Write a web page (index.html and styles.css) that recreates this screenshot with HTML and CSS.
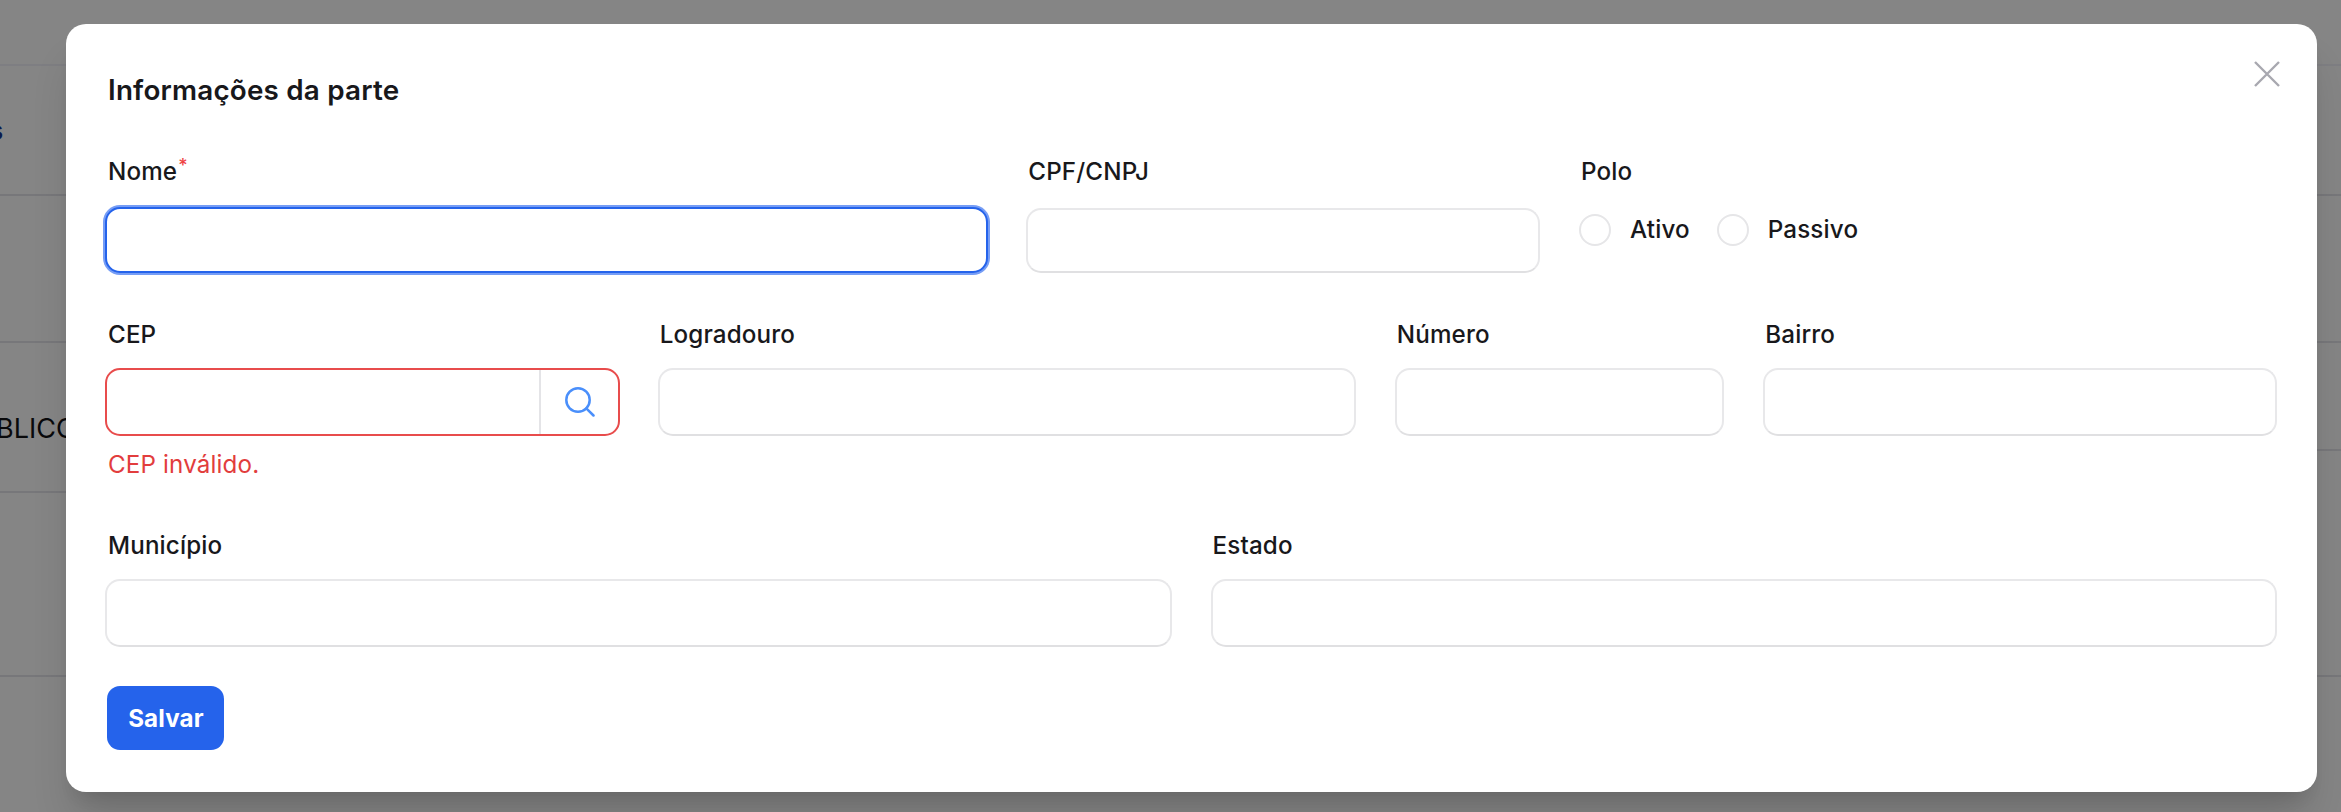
FILE: index.html
```html
<!DOCTYPE html>
<html lang="pt-BR">
<head>
<meta charset="utf-8">
<title>Informações da parte</title>
<link rel="stylesheet" href="styles.css">
</head>
<body>
<div class="page">
  <div class="list">
    <div class="row row-top"></div>
    <div class="row row-head"><span class="link">s</span></div>
    <div class="row row-a"></div>
    <div class="row row-b"><span class="party">BLICO</span></div>
    <div class="row row-c"></div>
  </div>
  <div class="list">
    <div class="row row-top"></div>
    <div class="row row-head"></div>
    <div class="row row-a"></div>
    <div class="row row-d"></div>
    <div class="row row-e"></div>
  </div>
</div>
<div class="overlay">
  <form class="modal">
    <header class="header">
      <h1 class="title">Informações da parte</h1>
      <svg class="close" viewBox="0 0 26 26"><path d="M1 1 25 25M25 1 1 25"/></svg>
    </header>
    <div class="grid first">
      <div class="field span5"><label class="label">Nome<span class="required">*</span></label><input class="input focused"></div>
      <div class="field span3"><label class="label">CPF/CNPJ</label><input class="input"></div>
      <div class="field span4">
        <span class="label">Polo</span>
        <div class="radios">
          <label class="radio"><span class="dot"></span>Ativo</label>
          <label class="radio"><span class="dot"></span>Passivo</label>
        </div>
      </div>
    </div>
    <div class="grid second">
      <div class="field span3">
        <label class="label">CEP</label>
        <div class="group">
          <input class="bare">
          <span class="search"><svg class="glass" viewBox="0 0 30 30"><circle cx="13" cy="13" r="11.7"/><path d="m21.3 21.3 7.2 7.2"/></svg></span>
        </div>
        <span class="error">CEP inválido.</span>
      </div>
      <div class="field span4"><label class="label">Logradouro</label><input class="input"></div>
      <div class="field span2"><label class="label">Número</label><input class="input"></div>
      <div class="field span3"><label class="label">Bairro</label><input class="input"></div>
    </div>
    <div class="grid third">
      <div class="field span6"><label class="label">Município</label><input class="input"></div>
      <div class="field span6"><label class="label">Estado</label><input class="input"></div>
    </div>
    <button class="save" type="button">Salvar</button>
  </form>
</div>
</body>
</html>
```
FILE: styles.css
```css
* { box-sizing: border-box; }
body {
  margin: 0;
  width: 2341px;
  height: 812px;
  overflow: hidden;
  position: relative;
  background: #858585;
  font-family: Inter, "Liberation Sans", sans-serif;
  color: #18181b;
}
.page { display: grid; grid-template-columns: 1fr 1fr; height: 812px; }
.row { display: flex; align-items: center; border-bottom: 2px solid #77777a; }
.row-top { height: 66px; border-color: #7e7e82; }
.row-head { height: 130px; }
.row-a { height: 147px; }
.row-b { height: 150px; }
.row-c { height: 184px; }
.row-d { height: 108px; }
.row-e { height: 226px; }
.link, .party { white-space: nowrap; font-size: 27px; }
.link { margin-left: -12px; color: #0b1a4d; font-weight: 700; }
.party { margin-left: -4px; padding-top: 22px; color: #09090b; }

.overlay { position: absolute; inset: 0; padding: 24px 24px 20px 66px; }
.modal {
  height: 767.5px;
  width: 2251px;
  padding: 46px 40px 0 39px;
  background: #fff;
  border-radius: 20px;
  box-shadow: 0 34px 42px -8px rgba(0, 0, 0, .15), 0 13px 17px -10px rgba(0, 0, 0, .12);
}
.header { display: flex; justify-content: space-between; padding-left: 3px; height: 85px; }
.title { margin: 1px 0 0; font-size: 27.8px; line-height: 38px; font-weight: 600; letter-spacing: .2px; }
.close { width: 26px; height: 26px; margin: -9px -3px 0 0; fill: none; stroke: #a8a8b0; stroke-width: 2.4; }
.grid { display: grid; grid-template-columns: repeat(12, minmax(0, 1fr)); column-gap: 39px; }
.first { height: 163px; }
.second { height: 211px; }
.third { height: 157px; }
.span2 { grid-column: span 2; }
.span3 { grid-column: span 3; }
.span4 { grid-column: span 4; }
.span5 { grid-column: span 5; }
.span6 { grid-column: span 6; }
.field { display: flex; flex-direction: column; }
.label, .error, .radio { font-size: 24.2px; line-height: 34px; letter-spacing: .15px; }
.label { height: 50px; padding-left: 2px; font-weight: 500; }
.field:first-child .label { padding-left: 3px; }
.first .label { height: 53px; }
.required { color: #ef4444; font-size: 18px; line-height: 0; vertical-align: 8px; margin-left: 1px; }
.input, .group { width: 100%; height: 68px; border: 2px solid #e8e8ea; border-radius: 15px; background: #fff; }
.first .input { height: 65px; }
.input { padding: 0 18px; outline: none; font: inherit; border-bottom-color: #e0e0e2; }
.first .focused { width: calc(100% + 1px); height: 66px; margin-top: -1px; border-color: #2563eb; box-shadow: 0 0 0 2px #769df5; }
.group { display: flex; width: calc(100% + 1px); overflow: hidden; border-color: #e84c4c; }
.bare { flex: 1; min-width: 0; border: 0; outline: none; background: none; }
.search { width: 79px; display: flex; align-items: center; justify-content: center; padding-left: 1px; border-left: 2px solid #e4e4e7; }
.glass { width: 30px; height: 30px; fill: none; stroke: #4a8ffb; stroke-width: 2.5; stroke-linecap: round; }
.error { margin-top: 12px; padding-left: 3px; color: #e23d3d; }
.radios { display: flex; gap: 27px; margin-top: 5px; }
.radio { display: flex; align-items: center; gap: 19px; font-weight: 500; }
.dot { width: 32px; height: 32px; border: 2px solid #e6e6e8; border-radius: 50%; }
.save {
  display: block;
  width: 117px;
  height: 64px;
  margin-left: 2.4px;
  padding: 0;
  border: 0;
  border-radius: 13px;
  background: #2563eb;
  color: #fff;
  font: 700 24.2px Inter, sans-serif;
  letter-spacing: .1px;
}
```
